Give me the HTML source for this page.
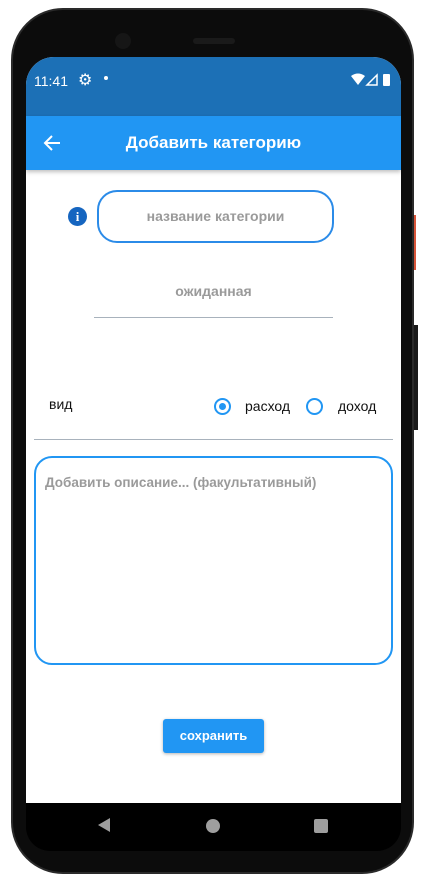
<!DOCTYPE html>
<html><head><meta charset="utf-8"><style>
*{margin:0;padding:0;box-sizing:border-box}
body{width:422px;height:882px;background:#fff;position:relative;overflow:hidden;font-family:"Liberation Sans","DejaVu Sans",sans-serif}
.abs{position:absolute}
.phone{left:11px;top:8px;width:403px;height:866px;background:#0c0c0c;border-radius:52px;border:2px solid #2a2a2a}
.screen{left:26px;top:57px;width:375px;height:746px;background:#fff;border-radius:28px 28px 0 0;overflow:hidden}
.status{left:0;top:0;width:375px;height:59px;background:#1c70b6;color:#fff;font-size:14px}
.appbar{left:0;top:59px;width:375px;height:54px;background:#2196f3;box-shadow:0 2px 4px rgba(0,0,0,.25)}
.nav{left:26px;top:803px;width:375px;height:48px;background:#000;border-radius:0 0 24px 24px}
.g{color:#9a9a9a;font-weight:bold;font-size:14px}
</style></head><body>
<div class="abs" style="left:412px;top:215px;width:4px;height:55px;background:#d8553a"></div>
<div class="abs" style="left:412px;top:325px;width:6px;height:105px;background:#1a1a1a"></div>
<div class="abs phone"></div>
<div class="abs" style="left:115px;top:33px;width:16px;height:16px;border-radius:50%;background:#161616"></div>
<div class="abs" style="left:193px;top:38px;width:42px;height:6px;border-radius:3px;background:#1a1a1a"></div>
<div class="abs screen">
 <div class="abs status">
  <span class="abs" style="left:8px;top:16px">11:41</span>
  <span class="abs" style="left:52px;top:13px;font-size:16px">⚙</span>
  <span class="abs" style="left:78px;top:19px;width:4px;height:4px;border-radius:50%;background:#fff"></span>
  <svg class="abs" style="left:325px;top:16px" width="42" height="14" viewBox="0 0 42 14"><path d="M0 3 Q7 -2 14 3 L7 12Z" fill="#fff"/><path d="M16 12 L26 2 L26 12Z" fill="none" stroke="#fff" stroke-width="1.5"/><rect x="32" y="1" width="7" height="12" rx="1" fill="#fff"/></svg>
 </div>
 <div class="abs appbar">
  <svg class="abs" style="left:17px;top:18px" width="18" height="18" viewBox="0 0 18 18"><path d="M17 9H3M9 2L2 9l7 7" fill="none" stroke="#fff" stroke-width="2"/></svg>
  <div class="abs" style="left:0;width:375px;top:17px;text-align:center;color:#fff;font-weight:bold;font-size:17px">Добавить категорию</div>
 </div>
</div>
<div class="abs" style="left:68px;top:207px;width:19px;height:19px;border-radius:50%;background:#1565c0;color:#fff;font-weight:bold;font-size:13px;text-align:center;line-height:19px;font-family:'Liberation Serif',serif">i</div>
<div class="abs g" style="left:97px;top:190px;width:237px;height:53px;border:2px solid #2b8be8;border-radius:20px;text-align:center;line-height:49px">название категории</div>
<div class="abs g" style="left:94px;top:283px;width:239px;text-align:center">ожиданная</div>
<div class="abs" style="left:94px;top:317px;width:239px;height:1px;background:#a8b2bc"></div>
<div class="abs" style="left:49px;top:396px;font-size:14px;color:#111">вид</div>
<div class="abs" style="left:214px;top:398px;width:17px;height:17px;border:2px solid #2196f3;border-radius:50%"></div>
<div class="abs" style="left:219px;top:403px;width:7px;height:7px;background:#2196f3;border-radius:50%"></div>
<div class="abs" style="left:245px;top:398px;font-size:14px;color:#111">расход</div>
<div class="abs" style="left:306px;top:398px;width:17px;height:17px;border:2px solid #2196f3;border-radius:50%"></div>
<div class="abs" style="left:338px;top:398px;font-size:14px;color:#111">доход</div>
<div class="abs" style="left:34px;top:439px;width:359px;height:1px;background:#a8b2bc"></div>
<div class="abs" style="left:34px;top:456px;width:359px;height:209px;border:2px solid #2196f3;border-radius:18px"></div>
<div class="abs g" style="left:45px;top:475px;font-size:13.5px">Добавить описание... (факультативный)</div>
<div class="abs" style="left:163px;top:719px;width:101px;height:34px;background:#2196f3;border-radius:3px;box-shadow:0 1px 3px rgba(0,0,0,.3);color:#fff;font-weight:bold;font-size:13px;text-align:center;line-height:34px">сохранить</div>
<div class="abs nav"></div>
<svg class="abs" style="left:97px;top:817px" width="14" height="16" viewBox="0 0 14 16"><path d="M13 1V15L1 8Z" fill="#9e9e9e"/></svg>
<div class="abs" style="left:206px;top:819px;width:14px;height:14px;border-radius:50%;background:#9e9e9e"></div>
<div class="abs" style="left:314px;top:819px;width:14px;height:14px;border-radius:2px;background:#9e9e9e"></div>
</body></html>
